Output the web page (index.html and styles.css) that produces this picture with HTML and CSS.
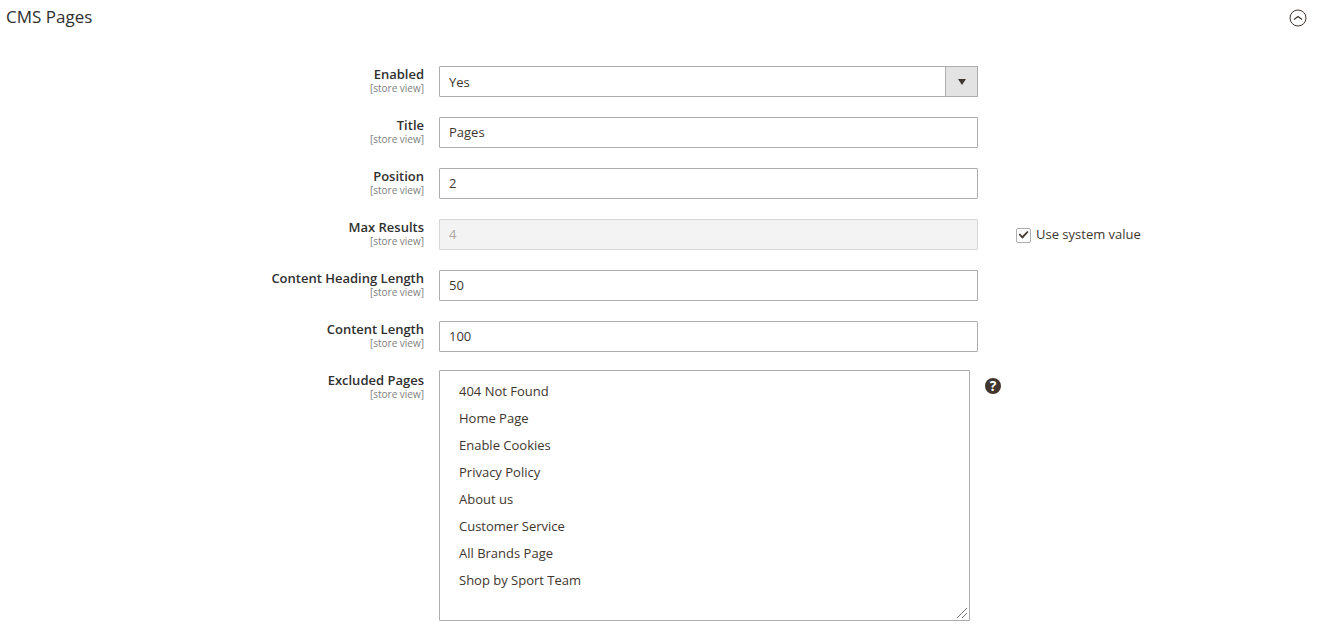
FILE: index.html
```html
<!DOCTYPE html>
<html lang="en">
<head>
<meta charset="utf-8">
<title>CMS Pages</title>
<link rel="stylesheet" href="styles.css">
</head>
<body>
<section class="section">
  <header class="section-head">
    <h2 class="section-title">CMS Pages</h2>
    <button class="toggle" type="button" aria-label="Collapse section">
      <svg width="18" height="18" viewBox="0 0 18 18" fill="none" stroke="#41362f" aria-hidden="true"><circle cx="9" cy="9" r="8"/><path d="M5 10.5 9 7.5l4 3" stroke-width="1.2"/></svg>
    </button>
  </header>
  <form class="fields">
    <div class="field">
      <div class="field-label"><label class="name" for="enabled">Enabled</label><span class="scope">[store view]</span></div>
      <div class="select-wrap">
        <select class="control" id="enabled"><option selected>Yes</option><option>No</option></select>
        <span class="select-arrow"><svg width="8" height="6" viewBox="0 0 8 6" aria-hidden="true"><path d="M0 0h8L4 6z" fill="#41362f"/></svg></span>
      </div>
    </div>
    <div class="field">
      <div class="field-label"><label class="name" for="title">Title</label><span class="scope">[store view]</span></div>
      <input class="control text" id="title" type="text" value="Pages">
    </div>
    <div class="field">
      <div class="field-label"><label class="name" for="position">Position</label><span class="scope">[store view]</span></div>
      <input class="control text" id="position" type="text" value="2">
    </div>
    <div class="field">
      <div class="field-label"><label class="name" for="max">Max Results</label><span class="scope">[store view]</span></div>
      <input class="control text" id="max" type="text" value="4" disabled>
      <div class="system">
        <input class="check" id="inherit" type="checkbox" checked>
        <label for="inherit">Use system value</label>
      </div>
    </div>
    <div class="field">
      <div class="field-label"><label class="name" for="heading-length">Content Heading Length</label><span class="scope">[store view]</span></div>
      <input class="control text" id="heading-length" type="text" value="50">
    </div>
    <div class="field">
      <div class="field-label"><label class="name" for="content-length">Content Length</label><span class="scope">[store view]</span></div>
      <input class="control text" id="content-length" type="text" value="100">
    </div>
    <div class="field field-multi">
      <div class="field-label"><label class="name" for="excluded">Excluded Pages</label><span class="scope">[store view]</span></div>
      <select class="multi" id="excluded" multiple size="8">
        <option>404 Not Found</option>
        <option>Home Page</option>
        <option>Enable Cookies</option>
        <option>Privacy Policy</option>
        <option>About us</option>
        <option>Customer Service</option>
        <option>All Brands Page</option>
        <option>Shop by Sport Team</option>
      </select>
      <button class="help" type="button" aria-label="Help">?</button>
    </div>
  </form>
</section>
</body>
</html>
```
FILE: styles.css
```css
* {
  box-sizing: border-box;
}

body {
  margin: 0;
  background: #fff;
  color: #41362f;
  font: 13px/18px "Open Sans", "Noto Sans", sans-serif;
}

.section-head {
  display: flex;
  align-items: center;
  justify-content: space-between;
  padding: 6px 14px 0 6px;
}

.section-title {
  margin: 0;
  color: #303030;
  font-size: 17px;
  font-weight: 500;
  line-height: 22px;
}

.toggle {
  display: flex;
  padding: 2px 0 0;
  border: 0;
  background: none;
}

.fields {
  display: flex;
  flex-direction: column;
  gap: 20px;
  padding: 38px 0 10px;
}

.field {
  display: grid;
  grid-template-columns: minmax(0, 439fr) minmax(0, 539fr) minmax(0, 343fr);
  align-items: start;
}

.field-label {
  display: flex;
  flex-direction: column;
  align-items: flex-end;
  height: 31px;
  padding-right: 15px;
}

.name {
  color: #303030;
  font-weight: 600;
  line-height: 16px;
}

.scope {
  color: #808080;
  font-size: 10px;
  line-height: 12px;
}

.control,
.multi {
  width: 100%;
  border: 1px solid #adadad;
  border-radius: 1px;
  background: #fff;
  color: #41362f;
  font: inherit;
}

.control {
  height: 31px;
  padding: 0 9px;
}

.text {
  padding-bottom: 2px;
}

.control:disabled {
  border-color: #d6d6d6;
  background: #f3f3f3;
  color: #a9a6a3;
}

.select-wrap {
  position: relative;
}

.select-wrap .control {
  display: block;
  appearance: none;
}

.select-arrow {
  position: absolute;
  top: 0;
  right: 0;
  bottom: 0;
  display: flex;
  align-items: center;
  justify-content: center;
  width: 33px;
  border: 1px solid #adadad;
  background: #e3e3e3;
  pointer-events: none;
}

.system {
  display: flex;
  align-items: center;
  gap: 5px;
  height: 30px;
  padding-left: 38px;
}

.check {
  display: grid;
  place-items: center;
  appearance: none;
  width: 15px;
  height: 15px;
  margin: 2px 0 0;
  border: 1px solid #adadad;
  border-radius: 2px;
  background: #fff;
}

.check:checked::before {
  content: "";
  width: 10px;
  height: 8px;
  background: #41362f;
  clip-path: polygon(0 45%, 14% 32%, 38% 62%, 88% 0, 100% 12%, 40% 96%);
}

.field-multi {
  grid-template-columns: minmax(0, 439fr) minmax(0, 531fr) minmax(0, 351fr);
  margin-top: -2px;
}

.field-multi .field-label {
  padding-top: 2px;
}

.multi {
  height: 251px;
  padding: 6px 9px;
  overflow: auto;
  resize: vertical;
}

.multi::-webkit-resizer {
  background: linear-gradient(135deg, transparent 56%, #777 56%, #777 60%, transparent 60%, transparent 77%, #777 77%, #777 81%, transparent 81%) 1px 1px / 12px 12px no-repeat;
}

.multi option {
  min-height: 0;
  padding: 5px 10px 4px;
  line-height: 18px;
}

.help {
  width: 16px;
  height: 16px;
  margin: 8px 0 0 15px;
  padding: 0;
  border: 0;
  border-radius: 50%;
  background: #41362f;
  color: #fff;
  font: 700 14px/16px "Open Sans", sans-serif;
}
```
